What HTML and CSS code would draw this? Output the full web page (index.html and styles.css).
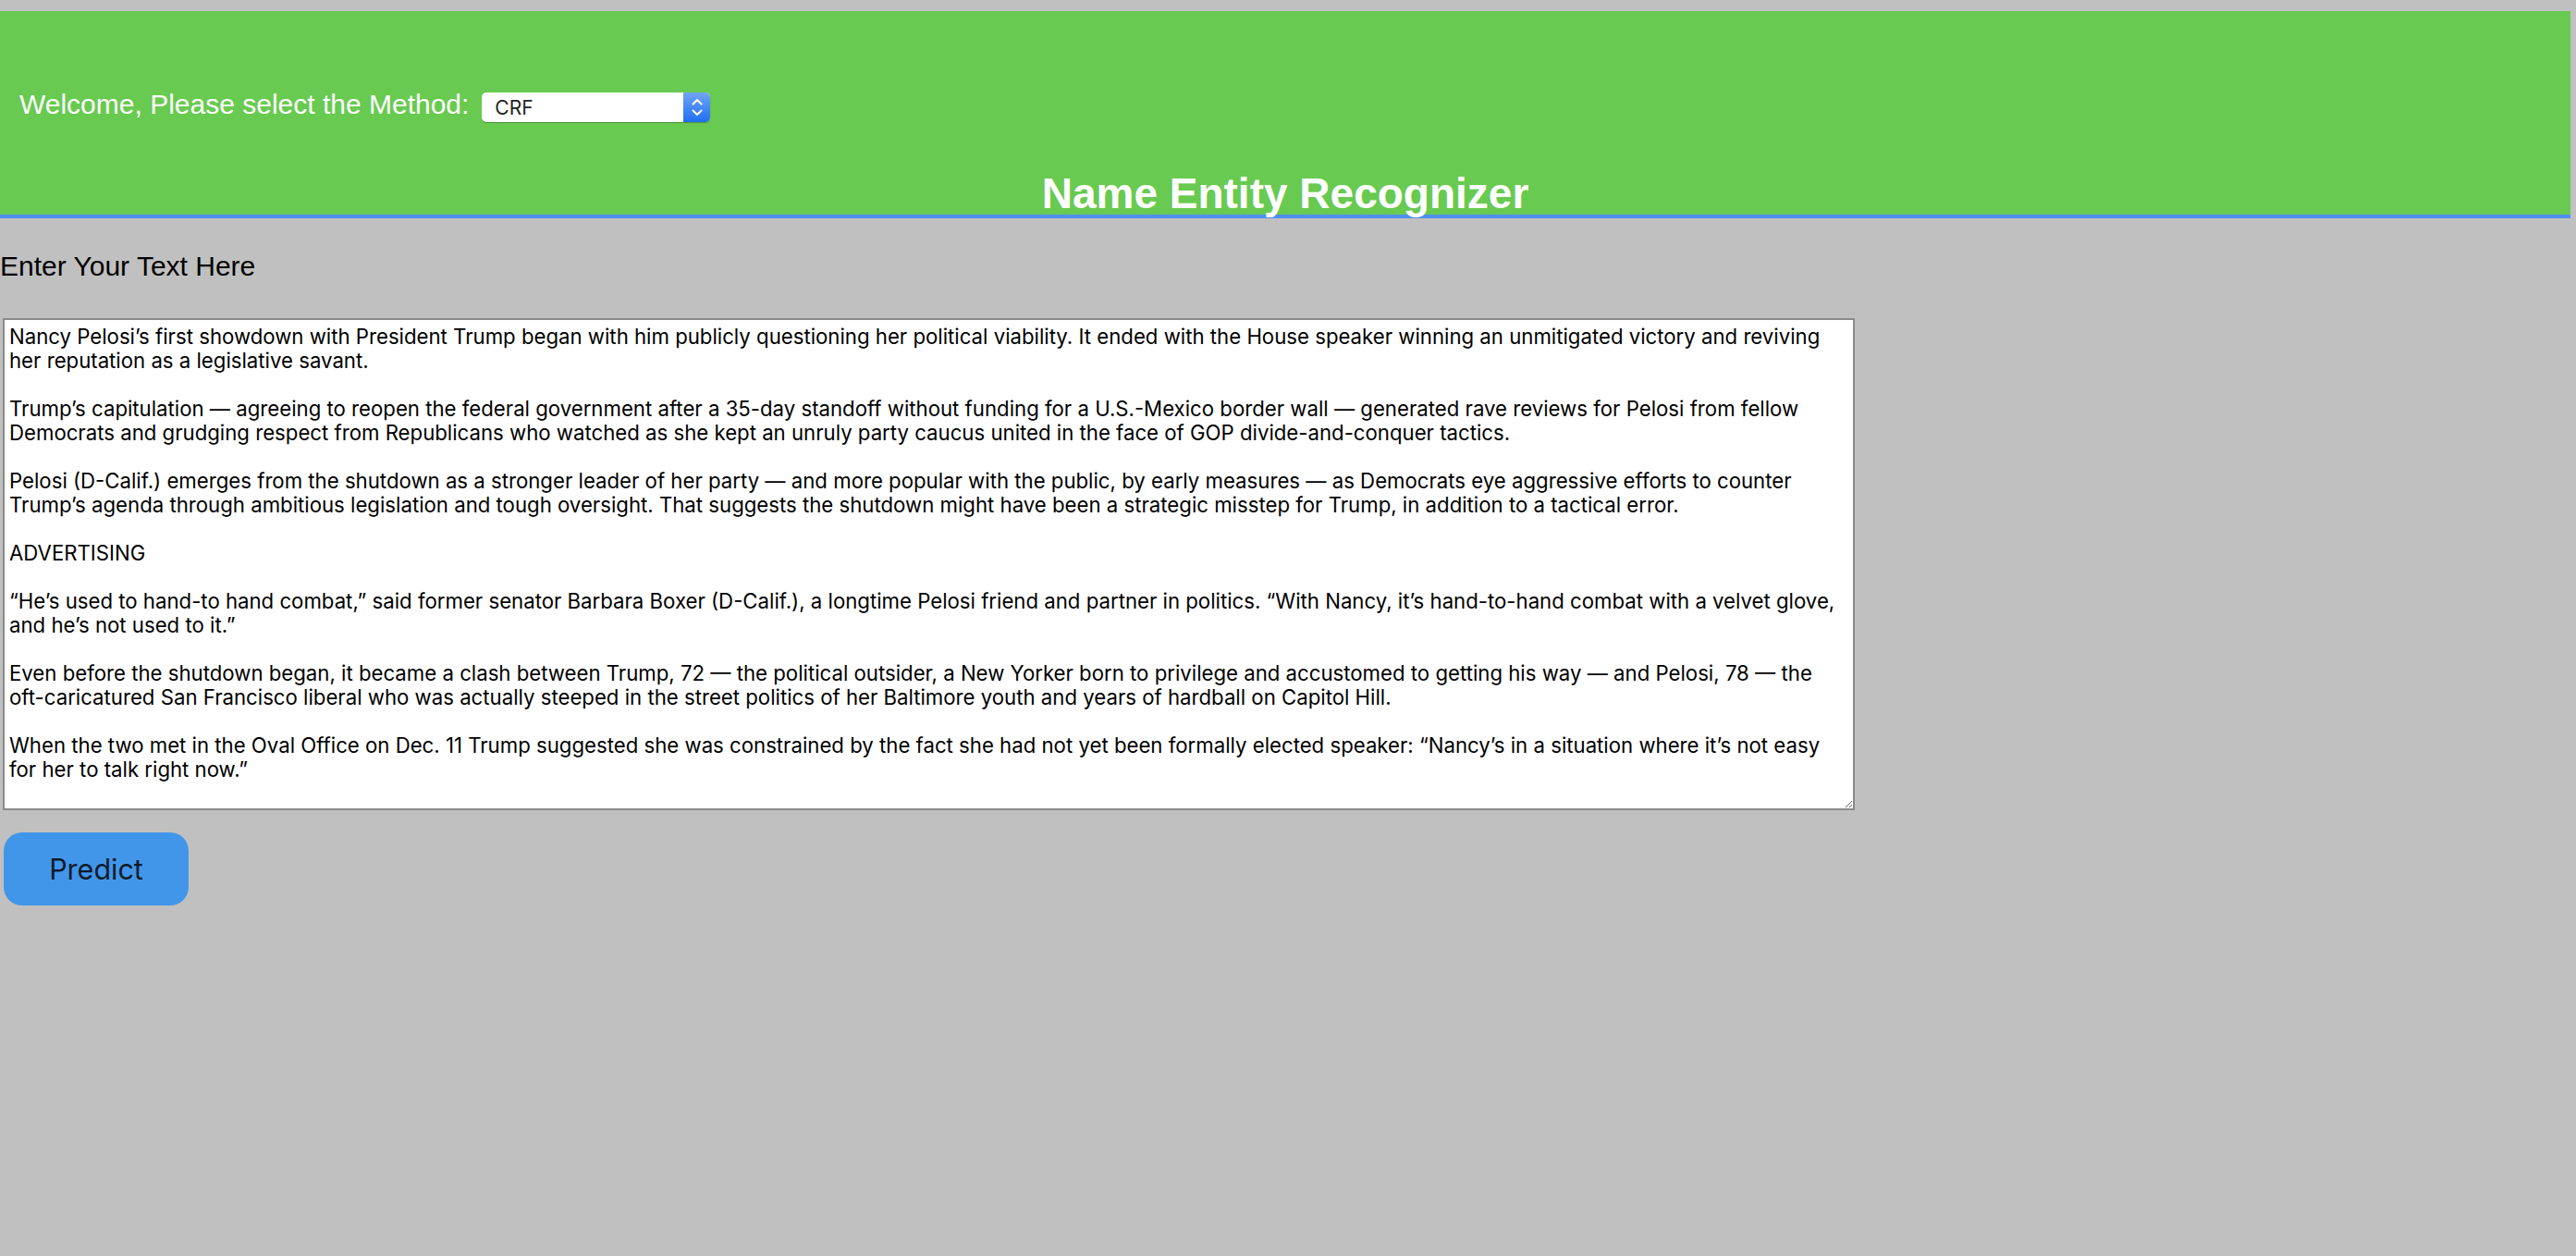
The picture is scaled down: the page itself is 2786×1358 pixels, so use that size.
FILE: index.html
```html
<!DOCTYPE html>
<html lang="en">
<head>
<meta charset="utf-8">
<title>Name Entity Recognizer</title>
<link rel="stylesheet" href="styles.css">
</head>
<body>
<header class="topbar">
  <div class="method-row">
    <label class="method-label" for="method">Welcome, Please select the Method:</label>
    <div class="select-wrap">
      <select id="method" class="method-select">
        <option>CRF</option>
        <option>HMM</option>
        <option>LSTM</option>
      </select>
      <span class="stepper">
        <svg width="14" height="22" viewBox="0 0 14 22"><path d="M2.5 7.5 L7 3 L11.5 7.5" fill="none" stroke="#fff" stroke-width="2" stroke-linecap="round" stroke-linejoin="round"/><path d="M2.5 14.5 L7 19 L11.5 14.5" fill="none" stroke="#fff" stroke-width="2" stroke-linecap="round" stroke-linejoin="round"/></svg>
      </span>
    </div>
  </div>
  <h1 class="title">Name Entity Recognizer</h1>
</header>
<main class="content">
  <p class="prompt">Enter Your Text Here</p>
  <textarea class="text-input">Nancy Pelosi’s first showdown with President Trump began with him publicly questioning her political viability. It ended with the House speaker winning an unmitigated victory and reviving her reputation as a legislative savant.

Trump’s capitulation — agreeing to reopen the federal government after a 35-day standoff without funding for a U.S.-Mexico border wall — generated rave reviews for Pelosi from fellow Democrats and grudging respect from Republicans who watched as she kept an unruly party caucus united in the face of GOP divide-and-conquer tactics.

Pelosi (D-Calif.) emerges from the shutdown as a stronger leader of her party — and more popular with the public, by early measures — as Democrats eye aggressive efforts to counter Trump’s agenda through ambitious legislation and tough oversight. That suggests the shutdown might have been a strategic misstep for Trump, in addition to a tactical error.

ADVERTISING

“He’s used to hand-to hand combat,” said former senator Barbara Boxer (D-Calif.), a longtime Pelosi friend and partner in politics. “With Nancy, it’s hand-to-hand combat with a velvet glove, and he’s not used to it.”

Even before the shutdown began, it became a clash between Trump, 72 — the political outsider, a New Yorker born to privilege and accustomed to getting his way — and Pelosi, 78 — the oft-caricatured San Francisco liberal who was actually steeped in the street politics of her Baltimore youth and years of hardball on Capitol Hill.

When the two met in the Oval Office on Dec. 11 Trump suggested she was constrained by the fact she had not yet been formally elected speaker: “Nancy’s in a situation where it’s not easy for her to talk right now.”</textarea>
  <button class="predict" type="button">Predict</button>
</main>
</body>
</html>
```

FILE: styles.css
```css
html, body {
  margin: 0;
  padding: 0;
}
body {
  background: #c0c0c0;
  font-family: "Liberation Sans", Arial, sans-serif;
  padding-top: 12px;
}
.topbar {
  background: #68ca50;
  margin-right: 6px;
  height: 220px;
  border-bottom: 4px solid #4f8ef0;
  display: flex;
  flex-direction: column;
}
.method-row {
  display: flex;
  align-items: flex-start;
  gap: 14px;
  padding: 84px 0 0 21px;
}
.method-label {
  color: #fff;
  font-size: 30px;
  line-height: 34px;
}
.select-wrap {
  display: flex;
  width: 247px;
  height: 32px;
  margin-top: 4px;
  border-radius: 5px;
  background: #fff;
  box-shadow: 0 1px 1px rgba(0, 0, 0, 0.28);
  overflow: hidden;
}
.method-select {
  appearance: none;
  -webkit-appearance: none;
  flex: 1;
  height: 32px;
  border: none;
  background: transparent;
  font-family: Inter, "Noto Sans", sans-serif;
  font-size: 21px;
  color: #222;
  padding: 0 0 0 14px;
  outline: none;
}
.stepper {
  width: 29px;
  height: 32px;
  display: flex;
  align-items: center;
  justify-content: center;
  background: linear-gradient(#72a5f6, #1f6ef2);
}
.title {
  margin: auto 0 0;
  text-align: center;
  color: #fff;
  font-size: 46px;
  line-height: 46px;
  font-weight: bold;
}
.prompt {
  margin: 0;
  padding-top: 35px;
  font-size: 30px;
  line-height: 34px;
  color: #000;
}
.text-input {
  display: block;
  box-sizing: border-box;
  margin: 39px 0 0 3px;
  width: 2003px;
  height: 532px;
  border: 2px solid #8a8a8a;
  background: #fff;
  padding: 5px;
  font-family: Inter, sans-serif;
  font-size: 22.2px;
  line-height: 26px;
  color: #000;
  resize: both;
}
.predict {
  display: block;
  margin: 24px 0 0 4px;
  width: 200px;
  height: 79px;
  border: none;
  border-radius: 20px;
  background: #4296e9;
  color: #0d1b2a;
  font-family: Inter, sans-serif;
  font-size: 30.5px;
}
```
